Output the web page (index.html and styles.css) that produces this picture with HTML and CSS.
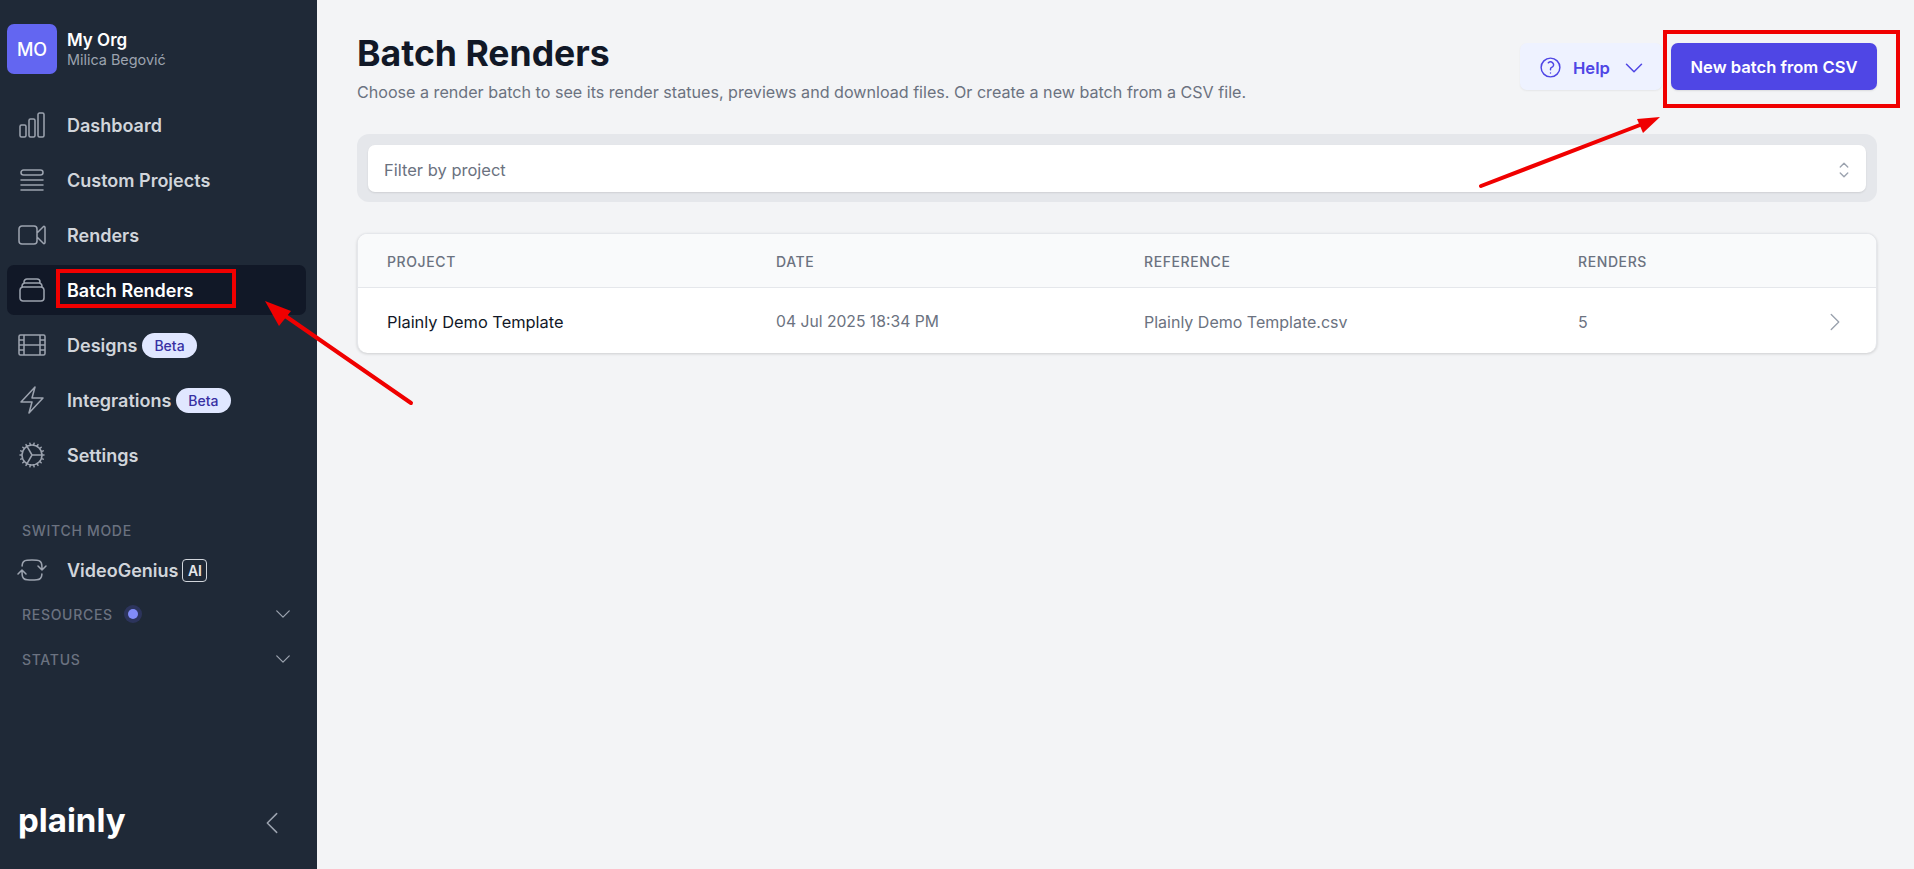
FILE: index.html
```html
<!DOCTYPE html>
<html lang="en">
<head>
    <meta charset="UTF-8">
    <meta name="viewport" content="width=device-width, initial-scale=1.0">
    <title>Batch Renders</title>
    <link rel="stylesheet" href="styles.css">
</head>
<body>

    <aside class="sidebar">
        <div class="org">
            <div class="avatar">MO</div>
            <div>
                <div class="org-name">My Org</div>
                <div class="org-user">Milica Begović</div>
            </div>
        </div>

        <nav class="nav">
            <a class="nav-item">
                <svg class="nav-icon" viewBox="0 0 24 24"><path d="M3 13.125C3 12.504 3.504 12 4.125 12h2.25c.621 0 1.125.504 1.125 1.125v6.75C7.5 20.496 6.996 21 6.375 21h-2.25A1.125 1.125 0 0 1 3 19.875v-6.75ZM9.75 8.625c0-.621.504-1.125 1.125-1.125h2.25c.621 0 1.125.504 1.125 1.125v11.25c0 .621-.504 1.125-1.125 1.125h-2.25a1.125 1.125 0 0 1-1.125-1.125V8.625ZM16.5 4.125c0-.621.504-1.125 1.125-1.125h2.25C20.496 3 21 3.504 21 4.125v15.75c0 .621-.504 1.125-1.125 1.125h-2.25a1.125 1.125 0 0 1-1.125-1.125V4.125Z"/></svg>
                Dashboard
            </a>
            <a class="nav-item">
                <svg class="nav-icon" viewBox="0 0 24 24"><path d="M3.75 12h16.5m-16.5 3.75h16.5m-16.5 3.75h16.5M5.625 4.5h12.75a1.875 1.875 0 0 1 0 3.75H5.625a1.875 1.875 0 0 1 0-3.75Z"/></svg>
                Custom Projects
            </a>
            <a class="nav-item">
                <svg class="nav-icon" viewBox="0 0 24 24"><path d="m15.75 10.5 4.72-4.72a.75.75 0 0 1 1.28.53v11.38a.75.75 0 0 1-1.28.53l-4.72-4.72M4.5 18.75h9a2.25 2.25 0 0 0 2.25-2.25v-9a2.25 2.25 0 0 0-2.25-2.25h-9A2.25 2.25 0 0 0 2.25 7.5v9a2.25 2.25 0 0 0 2.25 2.25Z"/></svg>
                Renders
            </a>
            <a class="nav-item active">
                <svg class="nav-icon" viewBox="0 0 24 24"><path d="M6 6.878V6a2.25 2.25 0 0 1 2.25-2.25h7.5A2.25 2.25 0 0 1 18 6v.878m-12 0c.235-.083.487-.128.75-.128h10.5c.263 0 .515.045.75.128m-12 0A2.25 2.25 0 0 0 4.5 9v.878m13.5-3A2.25 2.25 0 0 1 19.5 9v.878m0 0a2.246 2.246 0 0 0-.75-.128H5.25c-.263 0-.515.045-.75.128m15 0A2.25 2.25 0 0 1 21 12v6a2.25 2.25 0 0 1-2.25 2.25H5.25A2.25 2.25 0 0 1 3 18v-6c0-.98.626-1.813 1.5-2.122"/></svg>
                Batch Renders
            </a>
            <a class="nav-item">
                <svg class="nav-icon" viewBox="0 0 24 24"><path d="M3.375 19.5h17.25a1.125 1.125 0 0 0 1.125-1.125V5.625A1.125 1.125 0 0 0 20.625 4.5H3.375A1.125 1.125 0 0 0 2.25 5.625v12.75A1.125 1.125 0 0 0 3.375 19.5ZM6 4.5v15M18 4.5v15M6 12h12M2.25 8.25H6M2.25 12H6M2.25 15.75H6M18 8.25h3.75M18 12h3.75M18 15.75h3.75"/></svg>
                Designs <span class="beta">Beta</span>
            </a>
            <a class="nav-item">
                <svg class="nav-icon" viewBox="0 0 24 24"><path d="m3.75 13.5 10.5-11.25L12 10.5h8.25L9.75 21.75 12 13.5H3.75Z"/></svg>
                Integrations <span class="beta">Beta</span>
            </a>
            <a class="nav-item">
                <svg class="nav-icon" viewBox="0 0 24 24"><path d="M4.5 12a7.5 7.5 0 0 0 15 0m-15 0a7.5 7.5 0 1 1 15 0m-15 0H3m16.5 0H21m-1.5 0H12m-8.457 3.077 1.41-.513m14.095-5.13 1.41-.513M5.106 17.785l1.15-.964m11.49-9.642 1.149-.964M7.501 19.795l.75-1.3m7.5-12.99.75-1.3m-6.063 16.658.26-1.477m2.605-14.772.26-1.477m0 17.726-.26-1.477M10.698 4.614l-.26-1.477M16.5 19.794l-.75-1.299M7.5 4.205 12 12m6.894 5.785-1.149-.964M6.256 7.178l-1.15-.964m15.352 8.864-1.41-.513M4.954 9.435l-1.41-.514M12.002 12l-3.75 6.495"/></svg>
                Settings
            </a>
        </nav>

        <div class="section-label switch-label">SWITCH MODE</div>
        <a class="nav-item mode-item">
            <svg class="nav-icon" viewBox="0 0 24 24"><path d="M19.5 12c0-1.232-.046-2.453-.138-3.662a4.006 4.006 0 0 0-3.7-3.7 48.678 48.678 0 0 0-7.324 0 4.006 4.006 0 0 0-3.7 3.7c-.017.22-.032.441-.046.662M19.5 12l3-3m-3 3-3-3m-12 3c0 1.232.046 2.453.138 3.662a4.006 4.006 0 0 0 3.7 3.7 48.656 48.656 0 0 0 7.324 0 4.006 4.006 0 0 0 3.7-3.7c.017-.22.032-.441.046-.662M4.5 12l3 3m-3-3-3 3"/></svg>
            VideoGenius <span class="ai-tag">AI</span>
        </a>

        <div class="section-row">
            <span class="section-label">RESOURCES</span>
            <span class="dot"></span>
            <svg class="section-chevron" viewBox="0 0 24 24"><path d="m19.5 8.25-7.5 7.5-7.5-7.5"/></svg>
        </div>
        <div class="section-row">
            <span class="section-label">STATUS</span>
            <svg class="section-chevron" viewBox="0 0 24 24"><path d="m19.5 8.25-7.5 7.5-7.5-7.5"/></svg>
        </div>

        <div class="sidebar-footer">
            <span class="logo">plainly</span>
            <svg class="collapse" viewBox="0 0 24 24"><path d="M15.75 19.5 8.25 12l7.5-7.5"/></svg>
        </div>
    </aside>

    <main class="main">
        <div class="page-header">
            <div>
                <h1>Batch Renders</h1>
                <p>Choose a render batch to see its render statues, previews and download files. Or create a new batch from a CSV file.</p>
            </div>
            <div class="actions">
                <button class="btn-help">
                    <svg class="help-icon" viewBox="0 0 24 24"><path d="M9.879 7.519c1.171-1.025 3.071-1.025 4.242 0 1.172 1.025 1.172 2.687 0 3.712-.203.179-.43.326-.67.442-.745.361-1.45.999-1.45 1.827v.75M21 12a9 9 0 1 1-18 0 9 9 0 0 1 18 0Zm-9 5.25h.008v.008H12v-.008Z"/></svg>
                    Help
                    <svg class="help-chevron" viewBox="0 0 24 24"><path d="m19.5 8.25-7.5 7.5-7.5-7.5"/></svg>
                </button>
                <button class="btn-primary">New batch from CSV</button>
            </div>
        </div>

        <div class="filter-wrap">
            <div class="filter">
                <span>Filter by project</span>
                <svg class="updown" viewBox="0 0 24 24"><path d="M8.25 15 12 18.75 15.75 15m-7.5-6L12 5.25 15.75 9"/></svg>
            </div>
        </div>

        <div class="table">
            <div class="table-row table-head">
                <div>PROJECT</div>
                <div>DATE</div>
                <div>REFERENCE</div>
                <div>RENDERS</div>
                <div></div>
            </div>
            <div class="table-row table-body">
                <div class="project-name">Plainly Demo Template</div>
                <div class="date-cell">04 Jul 2025 18:34 PM</div>
                <div>Plainly Demo Template.csv</div>
                <div>5</div>
                <svg class="row-chevron" viewBox="0 0 24 24"><path d="m8.25 4.5 7.5 7.5-7.5 7.5"/></svg>
            </div>
        </div>
    </main>

    <!-- red tutorial marks drawn over the page -->
    <svg class="marks" viewBox="0 0 1914 869">
        <rect x="58" y="271" width="176" height="35"/>
        <rect x="1665" y="32" width="233" height="74"/>
        <line x1="411" y1="403" x2="281" y2="313"/>
        <polygon points="265,301 291,311 279,326"/>
        <line x1="1481" y1="186" x2="1640" y2="125"/>
        <polygon points="1660,117 1643,133 1637,119"/>
    </svg>

</body>
</html>
```

FILE: styles.css
```css
* {
    box-sizing: border-box;
}
body {
    font-family: Inter, "Noto Sans", sans-serif;
    background-color: #f3f4f6;
    display: flex;
    height: 100vh;
    margin: 0;
    overflow: hidden;
    color: #111827;
}
svg {
    fill: none;
    stroke: currentColor;
    stroke-linecap: round;
    stroke-linejoin: round;
    flex-shrink: 0;
}

/* sidebar */
.sidebar {
    width: 317px;
    flex-shrink: 0;
    background: #1f2937;
    display: flex;
    flex-direction: column;
    padding: 24px 11px 0 7px;
}
.org {
    display: flex;
    align-items: center;
    gap: 10px;
    height: 50px;
}
.avatar {
    width: 50px;
    height: 50px;
    border-radius: 7px;
    background: #6366f1;
    color: white;
    display: flex;
    align-items: center;
    justify-content: center;
    font-size: 18px;
    font-weight: 500;
}
.org-name {
    color: white;
    font-size: 17px;
    font-weight: 600;
    line-height: 22px;
}
.org-user {
    color: #9ca3af;
    font-size: 14.4px;
    line-height: 18px;
}
.nav {
    margin-top: 26px;
    display: flex;
    flex-direction: column;
    gap: 5px;
}
.nav-item {
    display: flex;
    align-items: center;
    height: 50px;
    padding-left: 9px;
    border-radius: 7px;
    color: #d1d5db;
    font-size: 18px;
    font-weight: 600;
}
.nav-item.active {
    background: #111827;
    color: white;
}
.nav-icon {
    width: 32px;
    height: 32px;
    margin-right: 19px;
    color: #9ca3af;
    stroke-width: 1.15;
}
.beta {
    margin-left: 5px;
    background: #e0e7ff;
    color: #3730a3;
    border-radius: 13px;
    height: 25px;
    line-height: 25px;
    padding: 0 12px;
    font-size: 14px;
    font-weight: 500;
}
.section-label {
    color: #6b7280;
    font-size: 14px;
    font-weight: 500;
    letter-spacing: 0.7px;
}
.switch-label {
    margin: 41px 0 0 15px;
    line-height: 20px;
}
.mode-item {
    margin-top: 9px;
    height: 40px;
}
.ai-tag {
    margin-left: 4px;
    width: 25px;
    height: 23px;
    border: 1px solid #d1d5db;
    border-radius: 4px;
    color: #e5e7eb;
    font-size: 14px;
    display: flex;
    align-items: center;
    justify-content: center;
}
.section-row {
    display: flex;
    align-items: center;
    height: 24px;
    margin: 12px 0 0 15px;
}
.section-row + .section-row {
    margin-top: 21px;
}
.dot {
    width: 10px;
    height: 10px;
    margin-left: 15px;
    border-radius: 50%;
    background: #818cf8;
    box-shadow: 0 0 0 4px rgba(99, 102, 241, 0.2);
}
.section-chevron {
    width: 20px;
    height: 20px;
    margin-left: auto;
    margin-right: 13px;
    color: #9ca3af;
    stroke-width: 1.5;
}
.sidebar-footer {
    margin-top: auto;
    height: 69px;
    display: flex;
    align-items: flex-start;
    justify-content: space-between;
    padding: 0 19px 0 11px;
}
.logo {
    color: white;
    font-size: 33px;
    font-weight: 700;
    line-height: 40px;
}
.collapse {
    width: 30px;
    height: 30px;
    margin-top: 8px;
    color: #9ca3af;
    stroke-width: 1.2;
}

/* main column */
.main {
    flex: 1;
    padding: 0 37px 0 40px;
}
.page-header {
    display: flex;
    justify-content: space-between;
    padding-top: 32px;
    height: 134px;
}
h1 {
    margin: 0 0 4px;
    font-size: 35.6px;
    font-weight: 700;
    line-height: 44px;
    color: #111827;
}
.page-header p {
    margin: 0;
    font-size: 16.13px;
    line-height: 24px;
    color: #6b7280;
}
.actions {
    display: flex;
    gap: 9px;
    margin-top: 11px;
    height: 47px;
}
.actions button {
    font-family: inherit;
    font-size: 16.6px;
    font-weight: 600;
    border: none;
    border-radius: 7px;
    height: 47px;
    display: flex;
    align-items: center;
    padding-top: 2px;
}
.btn-help {
    width: 142px;
    padding: 0 0 0 18px;
    background: #eef2ff;
    color: #4f46e5;
    box-shadow: 0 1px 2px rgba(0, 0, 0, 0.06);
}
.help-icon {
    width: 25px;
    height: 25px;
    margin-right: 10px;
    stroke-width: 1.4;
}
.help-chevron {
    width: 24px;
    height: 24px;
    margin-left: 12px;
    stroke-width: 1.5;
}
.btn-primary {
    width: 206px;
    justify-content: center;
    background: #4f46e5;
    color: white;
    box-shadow: 0 1px 2px rgba(0, 0, 0, 0.1);
}
.filter-wrap {
    height: 68px;
    padding: 11px;
    border-radius: 12px;
    background: #e5e7eb;
}
.filter {
    height: 47px;
    padding: 2px 10px 0 16px;
    border-radius: 7px;
    background: white;
    box-shadow: 0 1px 2px rgba(0, 0, 0, 0.1);
    display: flex;
    align-items: center;
    justify-content: space-between;
    font-size: 16.5px;
    color: #6b7280;
}
.updown {
    width: 24px;
    height: 24px;
    color: #9ca3af;
    stroke-width: 1.4;
}
.table {
    margin-top: 31px;
    border-radius: 10px;
    background: white;
    overflow: hidden;
    border: 1px solid #e5e7eb;
    border-bottom: none;
    box-shadow: 0 1px 3px rgba(0, 0, 0, 0.16);
}
.table-row {
    display: grid;
    grid-template-columns: 389px 368px 434px 1fr 53px;
    align-items: center;
    padding-left: 29px;
}
.table-head {
    height: 54px;
    padding-top: 2px;
    background: #f9fafb;
    border-bottom: 1px solid #e5e7eb;
    color: #6b7280;
    font-size: 14px;
    font-weight: 500;
    letter-spacing: 0.6px;
}
.table-body {
    height: 65px;
    padding-top: 2px;
    font-size: 16px;
    color: #6b7280;
}
.project-name {
    color: #111827;
    font-size: 16.4px;
}
.date-cell {
    font-size: 15.7px;
}
.row-chevron {
    width: 24px;
    height: 24px;
    color: #9ca3af;
    stroke-width: 1.4;
}

/* tutorial annotations */
.marks {
    position: absolute;
    top: 0;
    left: 0;
    width: 1914px;
    height: 869px;
    pointer-events: none;
}
.marks rect {
    stroke: #f00000;
    stroke-width: 4;
    stroke-linejoin: miter;
}
.marks line {
    stroke: #f00000;
    stroke-width: 4;
}
.marks polygon {
    fill: #f00000;
    stroke: none;
}
```
